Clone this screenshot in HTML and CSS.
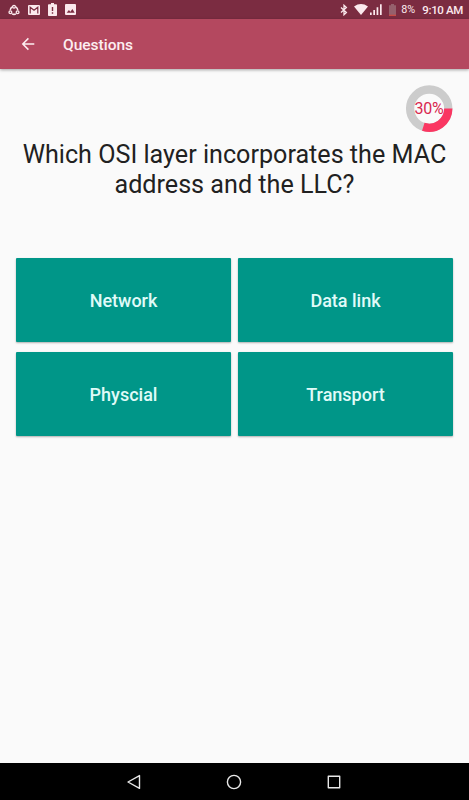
FILE: index.html
```html
<!DOCTYPE html>
<html lang="en">
<head>
  <meta charset="UTF-8">
  <title>Questions</title>
  <link rel="stylesheet" href="styles.css">
</head>
<body>
  <div class="status-bar">
    <div class="notifications">
      <svg width="12" height="12" viewBox="0 0 12 12" fill="none" stroke="currentColor">
        <path d="M2.2 6.3A4 4 0 0 1 4.3 3M7.8 3A4 4 0 0 1 9.8 6.3M4 9.8A4 4 0 0 0 8 9.8" stroke-width="1.5"/>
        <circle cx="6" cy="2.8" r="1.4" stroke-width="1.3"/>
        <circle cx="2.4" cy="8.3" r="1.4" stroke-width="1.3"/>
        <circle cx="9.6" cy="8.3" r="1.4" stroke-width="1.3"/>
      </svg>
      <svg width="12" height="10" viewBox="0 0 12 10">
        <rect width="12" height="10" rx="1" fill="currentColor"/>
        <path d="M2.2 8.6V2.3L6 5.3l3.8-3v6.3" fill="none" stroke="#7b2c41" stroke-width="1.2"/>
      </svg>
      <svg width="9" height="13" viewBox="0 0 9 13">
        <path d="M3 0h3v1.3h2.2q.8 0 .8.8v10.1q0 .8-.8.8H.8q-.8 0-.8-.8V2.1q0-.8.8-.8H3z" fill="currentColor"/>
        <path d="M4.5 4v4M4.5 9.2v1.5" stroke="#7b2c41" stroke-width="1.4"/>
      </svg>
      <svg width="11" height="11" viewBox="0 0 11 11">
        <rect width="11" height="11" rx="1" fill="currentColor"/>
        <path d="M1.7 8.8l2.2-2.9 1.5 1.8 2-2.6 2.3 3.7z" fill="#7b2c41"/>
      </svg>
    </div>
    <div class="system">
      <svg class="bluetooth" width="8" height="12" viewBox="0 0 8 12" fill="none" stroke="currentColor" stroke-width="1.3">
        <path d="M1 3.4l5.4 5L4 10.7V1.3l2.4 2.3L1 8.6"/>
      </svg>
      <svg class="wifi" width="14" height="11" viewBox="0 0 14 11" fill="currentColor">
        <path d="M0 2.5Q7-2.4 14 2.5L7 11z"/>
      </svg>
      <svg class="signal" width="12" height="11" viewBox="0 0 12 11" fill="currentColor">
        <path d="M0 8.5h1.7V11H0zM3.3 6H5v5H3.3zM6.6 3.3h1.7V11H6.6zM10 .3h1.7V11H10z"/>
      </svg>
      <svg class="battery" width="7" height="12" viewBox="0 0 7 12">
        <path d="M2 0h3v1.2h2V12H0V1.2h2z" fill="#95606c"/>
        <path d="M0 10.7h7V12H0z" fill="#c94b45"/>
      </svg>
      <span class="level">8%</span>
      <span class="time">9:10 AM</span>
    </div>
  </div>

  <header class="app-bar">
    <svg width="14" height="14" viewBox="0 0 14 14" fill="none" stroke="currentColor" stroke-width="1.5">
      <path d="M13.3 7H2M7.4 1.4L1.8 7l5.6 5.6"/>
    </svg>
    <h1>Questions</h1>
  </header>

  <main>
    <div class="progress">
      <svg width="48" height="48" viewBox="0 0 48 48" fill="none" stroke-width="8.3">
        <circle cx="24.2" cy="24.6" r="19.1" stroke="#ccc"/>
        <path d="M43.3 24.6A19.1 19.1 0 0 1 18.3 42.77" stroke="#fa3762"/>
      </svg>
      <span class="percent">30%</span>
    </div>
    <h2>Which OSI layer incorporates the MAC address and the LLC?</h2>
    <div class="answers">
      <button>Network</button>
      <button>Data link</button>
      <button>Physcial</button>
      <button>Transport</button>
    </div>
  </main>

  <nav class="nav-bar">
    <svg width="16" height="16" viewBox="0 0 16 16"><path d="M13.5 1.6v12.8L2 8z"/></svg>
    <svg width="16" height="16" viewBox="0 0 16 16"><circle cx="8" cy="8" r="6.6"/></svg>
    <svg width="16" height="16" viewBox="0 0 16 16"><path d="M2.3 2.3h11.4v11.4H2.3z"/></svg>
  </nav>
</body>
</html>
```

FILE: styles.css
```css
* {
  margin: 0;
  padding: 0;
  box-sizing: border-box;
}

body {
  height: 800px;
  display: flex;
  flex-direction: column;
  font-family: Roboto, sans-serif;
  background: #fafafa;
  color: #212121;
  overflow: hidden;
}

svg {
  display: block;
  flex: none;
}

.status-bar {
  height: 19px;
  padding: 0 6px 0 8px;
  display: flex;
  justify-content: space-between;
  align-items: center;
  background: #7b2c41;
  color: #fbe9ed;
}

.notifications,
.system {
  display: flex;
  align-items: center;
}

.notifications {
  gap: 8px;
}

.wifi {
  margin-left: 6px;
}

.signal {
  margin-left: 2px;
}

.battery {
  margin-left: 7px;
}

.level {
  margin-left: 5px;
  font-size: 10.8px;
}

.time {
  margin-left: 7px;
  font-size: 11.5px;
  font-weight: 500;
  letter-spacing: -0.35px;
}

/* App bar */
.app-bar {
  height: 50px;
  padding-left: 21px;
  display: flex;
  align-items: center;
  gap: 28px;
  background: #b4485f;
  color: #fdeef1;
  box-shadow: 0 1px 3px rgba(0,0,0,0.35);
}

.app-bar h1 {
  padding-top: 1px;
  font-size: 15.5px;
  font-weight: 500;
}

main {
  flex: 1;
  padding: 15px 16px 0;
  display: flex;
  flex-direction: column;
}

.progress {
  position: relative;
  align-self: flex-end;
}

.percent {
  position: absolute;
  inset: 0;
  line-height: 49px;
  text-align: center;
  font-size: 16px;
  letter-spacing: -0.2px;
  color: #d8284f;
}

h2 {
  margin-top: 8px;
  font-size: 25.15px;
  line-height: 30px;
  font-weight: 400;
  text-align: center;
}

/* Answer buttons */
.answers {
  margin-top: 58px;
  display: grid;
  grid-template-columns: 1fr 1fr;
  grid-auto-rows: 84px;
  gap: 10px 7px;
}

.answers button {
  border: none;
  border-radius: 1px;
  background: #009688;
  color: #e0fbf8;
  font-family: inherit;
  font-size: 18px;
  font-weight: 500;
  box-shadow: 0 1px 2px rgba(0,0,0,0.3);
}

/* System navigation */
.nav-bar {
  height: 37px;
  padding-right: 1px;
  display: flex;
  justify-content: center;
  align-items: center;
  gap: 84px;
  background: #000;
}

.nav-bar svg {
  fill: none;
  stroke: #e8e8e8;
  stroke-width: 1.4;
  stroke-linejoin: round;
}
```
